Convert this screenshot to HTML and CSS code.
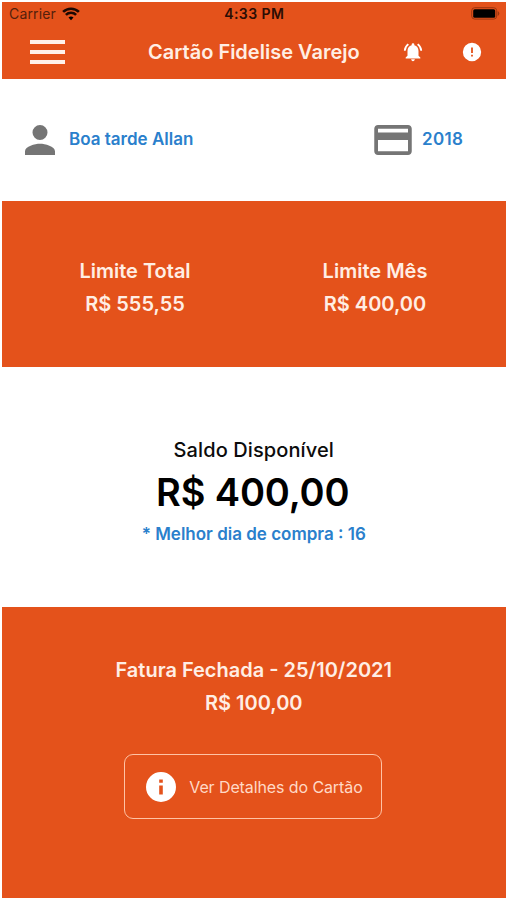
FILE: index.html
```html
<!DOCTYPE html>
<html lang="pt-BR">
<head>
<meta charset="utf-8">
<title>Cartão Fidelise Varejo</title>
<link rel="stylesheet" href="styles.css">
</head>
<body>
<div class="app">
  <header class="header">
    <div class="status">
      <div class="carrier">
        <span>Carrier</span>
        <svg class="wifi" viewBox="0 0 18 14"><path d="M9 13.2 6.5 10.6a3.6 3.6 0 0 1 5 0z"/><path class="arc" d="M3.9 7.9a7.3 7.3 0 0 1 10.2 0M1.1 4.9a11.3 11.3 0 0 1 15.8 0"/></svg>
      </div>
      <span class="time">4:33 PM</span>
      <svg class="battery" viewBox="0 0 29 13"><rect class="shell" x=".7" y=".7" width="25" height="11.4" rx="3"/><rect x="2.2" y="2.2" width="22" height="8.5" rx="1.5"/><path class="shell-tip" d="M26.7 4v5q1.6-.8 1.6-2.5T26.7 4z"/></svg>
    </div>
    <nav class="toolbar">
      <div class="menu"><i></i><i></i><i></i></div>
      <h1 class="title">Cartão Fidelise Varejo</h1>
      <svg class="bell" viewBox="0 0 24 24"><path d="M7.58 4.08 6.15 2.65C3.75 4.48 2.17 7.3 2.03 10.5h2a8.45 8.45 0 0 1 3.55-6.42zm12.39 6.42h2c-.15-3.2-1.73-6.02-4.12-7.85l-1.42 1.43a8.5 8.5 0 0 1 3.54 6.42zM18 11c0-3.07-1.64-5.64-4.5-6.32V4a1.5 1.5 0 0 0-3 0v.68C7.63 5.36 6 7.92 6 11v5l-2 2v1h16v-1l-2-2zm-6 11c1.1 0 2-.9 2-2h-4c0 1.1.9 2 2 2z"/></svg>
      <svg class="alert" viewBox="0 0 24 24"><path fill-rule="evenodd" d="M12 2a10 10 0 1 0 0 20 10 10 0 0 0 0-20zm1 15h-2v-2h2zm0-4h-2V7h2z"/></svg>
    </nav>
  </header>

  <section class="user">
    <svg class="person" viewBox="4 4 16 16"><path d="M12 12a4 4 0 1 0 0-8 4 4 0 0 0 0 8zm0 2c-2.67 0-8 1.34-8 4v2h16v-2c0-2.66-5.33-4-8-4z"/></svg>
    <span class="greeting">Boa tarde Allan</span>
    <svg class="card" viewBox="2 4 20 16"><path d="M20 4H4c-1.11 0-1.99.89-1.99 2L2 18c0 1.11.89 2 2 2h16c1.11 0 2-.89 2-2V6c0-1.11-.89-2-2-2zm0 14H4v-6h16zm0-10H4V6h16z"/></svg>
    <span class="number">2018</span>
  </section>

  <section class="limits">
    <div class="limit"><span class="limit-total">Limite Total</span><span class="total-value">R$ 555,55</span></div>
    <div class="limit"><span class="limit-month">Limite Mês</span><span class="month-value">R$ 400,00</span></div>
  </section>

  <section class="balance">
    <span class="balance-label">Saldo Disponível</span>
    <strong class="balance-value">R$ 400,00</strong>
    <span class="best-day">* Melhor dia de compra : 16</span>
  </section>

  <section class="invoice">
    <span class="invoice-label">Fatura Fechada - 25/10/2021</span>
    <span class="invoice-value">R$ 100,00</span>
    <button class="details">
      <svg class="info" viewBox="2 2 20 20"><path fill-rule="evenodd" d="M12 2a10 10 0 1 0 0 20 10 10 0 0 0 0-20zm1.2 15h-2.4v-6h2.4zm0-7.8h-2.4V7h2.4z"/></svg>
      <span class="details-label">Ver Detalhes do Cartão</span>
    </button>
  </section>
</div>
</body>
</html>
```

FILE: styles.css
```css
* { box-sizing: border-box; }
body { margin: 0; background: #fff; font-family: Inter, "Liberation Sans", sans-serif; font-weight: 600; }
svg { display: block; flex: none; }
span, h1, strong { white-space: nowrap; }

.app {
  width: 507px;
  height: 900px;
  padding: 2px 1.5px 2px 2px;
  display: grid;
  grid-template-rows: 77px 122px 166px 240px 291px;
}
.header, .limits, .invoice { background: #e4521b; color: #ffeee4; }

.status {
  height: 23px;
  padding: 0 6px 0 7px;
  display: grid;
  grid-template-columns: 1fr auto 1fr;
  align-items: center;
  color: #2b0d04;
  font-size: 14px;
}
.time { letter-spacing: .45px; }
.carrier { display: flex; align-items: center; gap: 6px; font-size: 14px; font-weight: 400; letter-spacing: .15px; color: #54200c; }
.wifi { width: 18px; height: 14px; }
.arc { fill: none; stroke: #1c0802; stroke-width: 2.6; }
.battery { width: 29px; height: 13px; justify-self: end; fill: #000; }
.shell { fill: none; stroke: #9c3610; stroke-width: 1; }
.shell-tip { fill: #9c3610; }

.toolbar { height: 54px; display: flex; align-items: center; padding-left: 28px; }
.menu { width: 35px; height: 24px; margin-top: -1px; display: flex; flex-direction: column; justify-content: space-between; }
.menu i { height: 4px; background: #fff2eb; }
.title { margin: 0 0 0 83px; width: 212px; font-size: 20px; font-weight: 600; line-height: 28px; }
.bell { width: 22px; height: 22px; margin-left: 42px; fill: #fff; }
.alert { width: 22px; height: 22px; margin-left: 37px; fill: #fff; }

.user { display: flex; align-items: center; padding-left: 23px; color: #2a80cc; font-size: 17px; }
.person { width: 30px; height: 30px; fill: #757575; }
.greeting { width: 126px; margin-left: 14px; padding-bottom: 3px; }
.card { width: 38px; height: 30px; margin-left: 179px; fill: #757575; }
.number { margin-left: 10px; padding-bottom: 3px; letter-spacing: .3px; }

.limits { display: grid; grid-template-columns: 240px 240px; padding: 54px 0 0 13px; font-size: 20px; line-height: 32px; }
.limit { display: flex; flex-direction: column; align-items: center; }
.total-value, .month-value, .invoice-value { line-height: 34px; }

.balance { display: flex; flex-direction: column; align-items: center; padding-top: 67px; color: #0c0c0c; }
.balance-label { font-size: 20px; font-weight: 500; line-height: 32px; letter-spacing: .1px; }
.balance-value { font-size: 38px; font-weight: 600; line-height: 53px; letter-spacing: -.15px; margin-right: 2px; color: #000; }
.best-day { font-size: 17px; line-height: 30px; color: #2a80cc; }

.invoice { display: flex; flex-direction: column; align-items: center; padding-top: 47px; font-size: 20px; line-height: 32px; }
.details {
  width: 258px;
  height: 65px;
  margin: 34px 1px 0 0;
  padding: 0 0 0 21px;
  display: flex;
  align-items: center;
  gap: 13px;
  border: 1px solid #ffc3a5;
  border-radius: 9px;
  background: none;
  color: #ffd9c6;
  font: 400 16px Inter, sans-serif;
  letter-spacing: -.1px;
}
.info { width: 30px; height: 30px; fill: #fff; }
```
